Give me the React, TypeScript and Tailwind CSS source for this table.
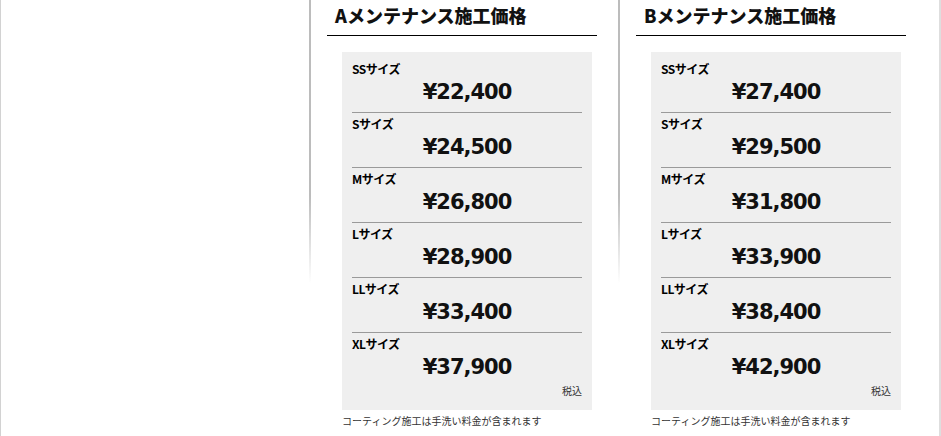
import React from "react";

const jp = { fontFamily: '"Noto Sans CJK JP", "Noto Sans", sans-serif' };
const num = { fontFamily: '"DejaVu Sans", Verdana, sans-serif' };

type Row = { label: string; price: string };

const A: Row[] = [
  { label: "SSサイズ", price: "¥22,400" },
  { label: "Sサイズ", price: "¥24,500" },
  { label: "Mサイズ", price: "¥26,800" },
  { label: "Lサイズ", price: "¥28,900" },
  { label: "LLサイズ", price: "¥33,400" },
  { label: "XLサイズ", price: "¥37,900" },
];

const B: Row[] = [
  { label: "SSサイズ", price: "¥27,400" },
  { label: "Sサイズ", price: "¥29,500" },
  { label: "Mサイズ", price: "¥31,800" },
  { label: "Lサイズ", price: "¥33,900" },
  { label: "LLサイズ", price: "¥38,400" },
  { label: "XLサイズ", price: "¥42,900" },
];

function Column({ title, rows }: { title: string; rows: Row[] }) {
  return (
    <div className="flex w-[309px] shrink-0">
      <div className="w-[2px] shrink-0 bg-linear-to-b from-[#bcbcbc] from-45% to-transparent to-65%" />
      <div className="flex flex-col">
        <div
          className="ml-[16px] w-[270px] border-b border-black pl-[8px] pb-[5px] text-[18px] leading-[30px] font-black text-[#111]"
          style={jp}
        >
          {title}
        </div>
        <div className="ml-[31px] mt-[16px] w-[250px] bg-[#efefef] px-[10px] pt-[6px] pb-[12px]">
          {rows.map((r, i) => (
            <div
              key={r.label}
              className={
                i < rows.length - 1 ? "border-b border-[#9a9a9a] pt-[3px] pb-[5px]" : "pt-[3px]"
              }
            >
              <div className="text-[12px] leading-[16px] font-bold text-black tracking-[-0.5px]" style={jp}>
                {r.label}
              </div>
              <div
                className="text-center text-[21px] leading-[30px] font-bold text-[#111] tracking-[-1px]"
                style={num}
              >
                {r.price}
              </div>
            </div>
          ))}
          <div className="mt-[2px] text-right text-[10px] leading-[14px] text-[#333]" style={jp}>
            税込
          </div>
        </div>
        <div className="ml-[31px] mt-[4px] text-[10px] leading-[14px] text-[#333]" style={jp}>
          コーティング施工は手洗い料金が含まれます
        </div>
      </div>
    </div>
  );
}

export default function App() {
  return (
    <div className="flex h-[436px] w-[941px] overflow-hidden bg-white">
      <div className="w-[309px] shrink-0 border-l border-[#d2d2d2]" />
      <Column title="Aメンテナンス施工価格" rows={A} />
      <Column title="Bメンテナンス施工価格" rows={B} />
      <div className="flex-1" />
      <div className="w-[2px] shrink-0 bg-[#dedede]" />
    </div>
  );
}
